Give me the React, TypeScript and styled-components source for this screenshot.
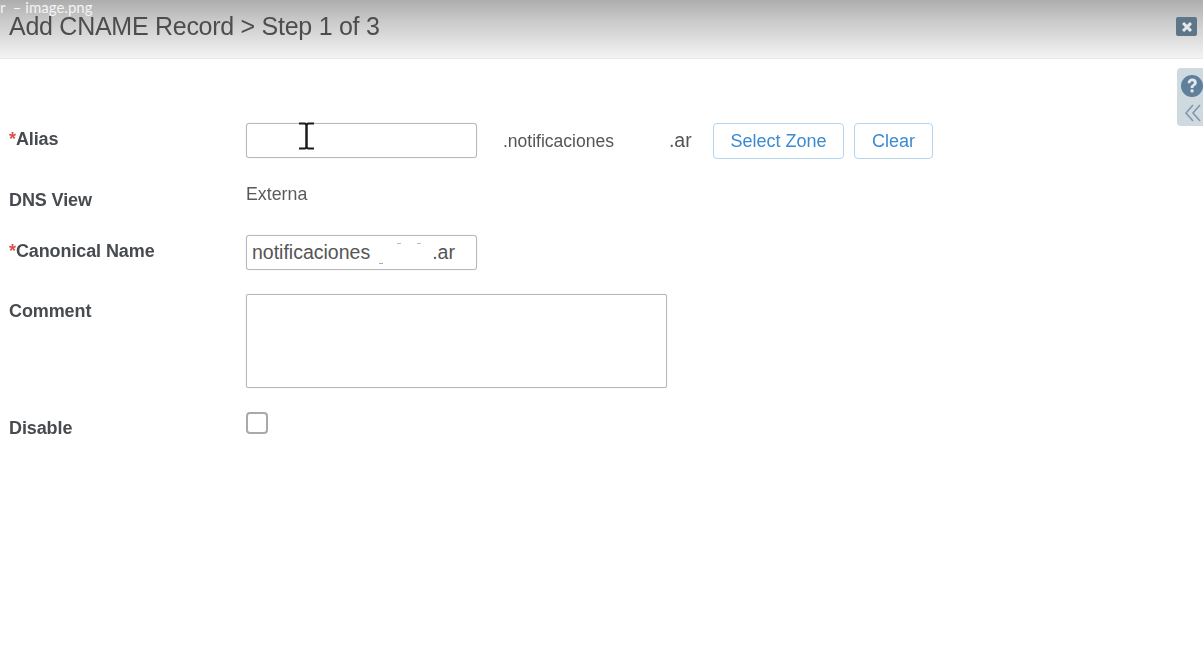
import React from 'react';
import styled, { createGlobalStyle } from 'styled-components';

const GlobalStyle = createGlobalStyle`
    html, body {
        margin: 0;
        padding: 0;
        height: 100%;
        background: #fff;
        overflow: hidden;
    }
    body {
        font-family: "Liberation Sans", Arial, sans-serif;
    }
`;

const CloseIcon = () => (
    <svg width="10" height="10" viewBox="0 0 12 12">
        <path d="M2.5 2.5 L9.5 9.5 M9.5 2.5 L2.5 9.5" stroke="#e4e8ec" strokeWidth="3.6" strokeLinecap="square" />
    </svg>
);

const HelpIcon = () => (
    <svg width="22" height="22" viewBox="0 0 22 22">
        <circle cx="11" cy="11" r="11" fill="#5f7f9b" />
        <path d="M6.6 8.2 C6.8 5.1 8.8 3.6 11.2 3.6 C13.8 3.6 15.8 5.2 15.8 7.6 C15.8 9.5 14.7 10.3 13.5 11.1 C12.6 11.7 12.5 12.1 12.5 13 L9.6 13 C9.6 11.3 10.1 10.5 11.3 9.7 C12.2 9.1 12.8 8.7 12.8 7.8 C12.8 6.8 12.1 6.3 11.1 6.3 C10 6.3 9.5 7.1 9.4 8.2 Z" fill="#e3e9ee" />
        <rect x="9.6" y="14.4" width="2.9" height="3" fill="#e3e9ee" />
    </svg>
);

const ChevronsIcon = () => (
    <svg width="16" height="18" viewBox="0 0 16 18" fill="none" stroke="#7d96ab" strokeWidth="1.5">
        <path d="M8 1 L1 9 L8 17" />
        <path d="M15 1 L8 9 L15 17" />
    </svg>
);

const TextCursor = () => (
    <svg width="17" height="28" viewBox="0 0 17 28" fill="none" stroke="#1a1a1a" strokeWidth="2">
        <path d="M1 1.5 H6.5 Q8.5 1.5 8.5 4 V24 Q8.5 26.5 6.5 26.5 H1" />
        <path d="M16 1.5 H10.5 Q8.5 1.5 8.5 4 V24 Q8.5 26.5 10.5 26.5 H16" />
    </svg>
);

export default function App() {
    return (
        <Page>
            <GlobalStyle />
            <Header>
                <Title>Add CNAME Record &gt; Step 1 of 3</Title>
                <CloseButton><CloseIcon /></CloseButton>
            </Header>
            <FileName>r &nbsp;– image.png</FileName>

            <SidePanel>
                <HelpIcon />
                <ChevronsSlot><ChevronsIcon /></ChevronsSlot>
            </SidePanel>

            <Form>
                <AliasRow>
                    <Label><Required>*</Required>Alias</Label>
                    <Controls>
                        <AliasField>
                            <Input />
                            <CursorSlot><TextCursor /></CursorSlot>
                        </AliasField>
                        <ZoneText>.notificaciones<Redacted /><ZoneSuffix>.ar</ZoneSuffix></ZoneText>
                        <ActionButton $width={131}>Select Zone</ActionButton>
                        <ActionButton $width={79}>Clear</ActionButton>
                    </Controls>
                </AliasRow>

                <DnsRow>
                    <Label>DNS View</Label>
                    <PlainValue>Externa</PlainValue>
                </DnsRow>

                <CanonicalRow>
                    <Label><Required>*</Required>Canonical Name</Label>
                    <FilledInput>notificaciones<SmallRedacted />.ar</FilledInput>
                </CanonicalRow>

                <CommentRow>
                    <Label>Comment</Label>
                    <TextArea />
                </CommentRow>

                <DisableRow>
                    <Label>Disable</Label>
                    <CheckBox />
                </DisableRow>
            </Form>
        </Page>
    );
}

const Page = styled.div`
    position: relative;
    width: 1203px;
    height: 646px;
    background: #fff;
    overflow: hidden;
`;

const Header = styled.div`
    height: 59px;
    box-sizing: border-box;
    padding: 12px 6px 0 9px;
    display: flex;
    justify-content: space-between;
    align-items: flex-start;
    background: linear-gradient(#adadad 0%, #c9c9c9 35%, #f3f3f3 100%);
    border-bottom: 1px solid #e8e8e8;
`;

const Title = styled.div`
    font-size: 25px;
    line-height: 29px;
    color: #4d4d4d;
    letter-spacing: -0.27px;
    filter: blur(0.35px);
`;

const CloseButton = styled.div`
    width: 21px;
    height: 19px;
    margin-top: 5px;
    display: flex;
    align-items: center;
    justify-content: center;
    background: #5f7689;
    border-radius: 2px;
`;

const FileName = styled.div`
    position: absolute;
    left: 0;
    top: -1px;
    font-family: Lato, "Open Sans", sans-serif;
    font-size: 15px;
    line-height: 16px;
    color: #f4f4f4;
`;

const SidePanel = styled.div`
    position: absolute;
    left: 1177px;
    top: 68px;
    width: 26px;
    height: 58px;
    box-sizing: border-box;
    padding: 7px 0 0 4px;
    display: flex;
    flex-direction: column;
    gap: 7px;
    background: #cfd9e0;
    border-radius: 4px 0 0 4px;
`;

const ChevronsSlot = styled.div`
    margin-left: 4px;
    line-height: 0;
`;

const Form = styled.div`
    padding: 64px 0 0 9px;
    color: #444;
`;

const Row = styled.div`
    display: grid;
    grid-template-columns: 237px 1fr;
    align-items: start;
`;

const AliasRow = styled(Row)``;

const DnsRow = styled(Row)`
    margin-top: 25px;
`;

const CanonicalRow = styled(Row)`
    margin-top: 25px;
`;

const CommentRow = styled(Row)`
    margin-top: 24px;
`;

const DisableRow = styled(Row)`
    margin-top: 24px;
`;

const Label = styled.div`
    font-size: 18px;
    line-height: 20px;
    font-weight: 700;
    color: #474b4f;
    letter-spacing: -0.1px;
    filter: blur(0.3px);

    ${AliasRow} & {
        margin-top: 6px;
    }
    ${DnsRow} & {
        margin-top: 6px;
    }
    ${CanonicalRow} & {
        margin-top: 6px;
    }
    ${CommentRow} & {
        margin-top: 7px;
    }
    ${DisableRow} & {
        margin-top: 6px;
    }
`;

const Required = styled.span`
    color: #d9534f;
`;

const Controls = styled.div`
    display: flex;
    align-items: flex-start;
`;

const AliasField = styled.div`
    position: relative;
    width: 231px;
    height: 35px;
`;

const Input = styled.div`
    box-sizing: border-box;
    width: 231px;
    height: 35px;
    background: #fff;
    border: 1px solid #b8b8b8;
    border-radius: 3px;
    box-shadow: 0 0 1px #c8c8c8;
`;

const CursorSlot = styled.div`
    position: absolute;
    left: 52px;
    top: -1px;
    line-height: 0;
`;

const ZoneText = styled.div`
    width: 210px;
    margin-left: 26px;
    padding-top: 7px;
    font-size: 17.5px;
    line-height: 20px;
    color: #555;
    white-space: nowrap;
    filter: blur(0.3px);
`;

const ZoneSuffix = styled.span`
    font-size: 19.5px;
`;

const Redacted = styled.span`
    display: inline-block;
    width: 55px;
`;

const SmallRedacted = styled.span`
    position: relative;
    display: inline-block;
    width: 62px;

    &::after {
        content: '';
        position: absolute;
        left: 9px;
        top: 4px;
        width: 4px;
        height: 1px;
        background: #aaa;
        box-shadow: 18px -20px 0 #bbb, 38px -20px 0 #bbb;
    }
`;

const ActionButton = styled.div<{ $width: number }>`
    box-sizing: border-box;
    width: ${p => p.$width}px;
    height: 36px;
    margin-right: 10px;
    display: flex;
    align-items: center;
    justify-content: center;
    background: #fff;
    border: 1px solid #b5d4ee;
    border-radius: 4px;
    font-size: 18px;
    color: #3b8ad2;
    filter: blur(0.25px);
`;

const PlainValue = styled.div`
    font-size: 17.8px;
    line-height: 20px;
    color: #5a5a5a;
    filter: blur(0.3px);
`;

const FilledInput = styled(Input)`
    padding: 6px 0 0 5px;
    font-size: 19.5px;
    line-height: 21px;
    color: #555;
    white-space: nowrap;
`;

const TextArea = styled.div`
    box-sizing: border-box;
    width: 421px;
    height: 94px;
    background: #fff;
    border: 1px solid #b8b8b8;
    border-radius: 2px;
    box-shadow: 0 0 1px #c8c8c8;
`;

const CheckBox = styled.div`
    box-sizing: border-box;
    width: 22px;
    height: 22px;
    background: #fff;
    border: 2px solid #a9a9a9;
    border-radius: 4px;
`;
